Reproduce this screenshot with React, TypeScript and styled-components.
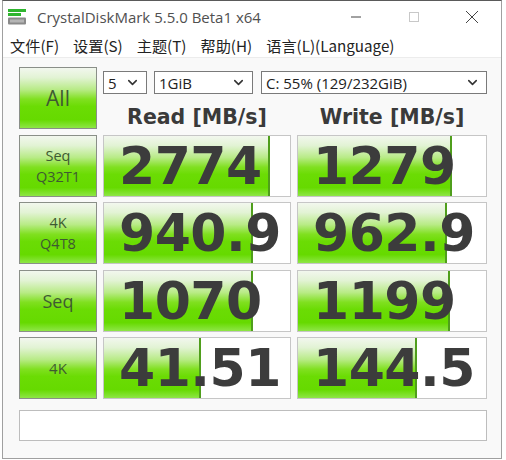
import styled, { createGlobalStyle } from "styled-components";
import { ChevronDown } from "lucide-react";

// #66dd00 (bar green)
// #f9f9f9 (client)
// #3c3c3c (numbers)

const GlobalStyle = createGlobalStyle`
  html, body {
    margin: 0;
    padding: 0;
    background: #ffffff;
  }
  body {
    font-family: "Open Sans", "Noto Sans CJK SC", sans-serif;
  }
`;

const Window = styled.div`
  width: 498px;
  height: 457px;
  margin-left: 2px;
  border: 1px solid #a0a0a0;
  border-top-color: #5a5a5a;
  display: flex;
  flex-direction: column;
  background: #ffffff;
`;

const TitleBar = styled.div`
  height: 31px;
  display: flex;
  align-items: center;
  padding-left: 4px;
  color: #505050;
  font-size: 15px;
`;

const TitleText = styled.span`
  margin-left: 10px;
  flex: 1;
`;

const WinButton = styled.div`
  width: 58px;
  height: 31px;
  display: flex;
  align-items: center;
  justify-content: center;
`;

const MenuBar = styled.div`
  height: 25px;
  display: flex;
  align-items: center;
  padding-left: 7px;
  gap: 14px;
  font-family: "Noto Sans CJK SC", sans-serif;
  font-size: 15.2px;
  color: #222;
`;

const Client = styled.div`
  flex: 1;
  background: #f9f9f9;
  border-top: 1px solid #ececec;
  padding: 9px 0 0 16px;
  display: grid;
  grid-template-columns: 78px 188px 190px;
  grid-template-rows: repeat(5, 62px) 36px;
  column-gap: 6px;
  row-gap: 5.5px;
`;

const greenGradient = `linear-gradient(to bottom,
  #f2f7ee 0%, #e2f3d4 16%, #b8eb86 36%, #80e020 52%,
  #6bdc04 64%, #66da00 86%, #8ee646 100%)`;

const LabelButton = styled.div<{ $size: number }>`
  border: 1px solid #8a8f88;
  background: ${greenGradient};
  display: flex;
  flex-direction: column;
  align-items: center;
  justify-content: center;
  color: #3e5a32;
  font-size: ${(p) => p.$size}px;
  line-height: ${(p) => (p.$size > 16 ? "1" : "21px")};
`;

const TopPanel = styled.div`
  grid-column: 2 / 4;
  display: flex;
  flex-direction: column;
`;

const SelectRow = styled.div`
  margin-top: 4px;
  display: flex;
  height: 24px;
`;

const Select = styled.div<{ $w: number; $ml: number }>`
  width: ${(p) => p.$w}px;
  margin-left: ${(p) => p.$ml}px;
  box-sizing: border-box;
  border: 1px solid #7a7a7a;
  background: #ffffff;
  display: flex;
  align-items: center;
  justify-content: space-between;
  padding: 0 6px 0 4px;
  font-size: 15px;
  color: #222;
`;

const HeadRow = styled.div`
  display: grid;
  grid-template-columns: 188px 190px;
  column-gap: 6px;
  margin-top: 11px;
`;

const Heading = styled.div`
  text-align: center;
  font-family: "DejaVu Sans", sans-serif;
  font-weight: bold;
  font-size: 20.5px;
  color: #3a3a3a;
`;

const Cell = styled.div`
  position: relative;
  border: 1px solid #c6c6c6;
  background: #ffffff;
  display: flex;
  align-items: center;
  justify-content: flex-start;
  padding-left: 15px;
  overflow: hidden;
`;

const Fill = styled.div`
  position: absolute;
  left: 0;
  top: 0;
  bottom: 0;
  background: ${greenGradient};
  border-right: 2px solid #4f9e1c;
`;

const Value = styled.span`
  position: relative;
  font-family: "DejaVu Sans", sans-serif;
  font-weight: bold;
  font-size: 52px;
  letter-spacing: -0.5px;
  color: #3c3c3c;
`;

const StatusBox = styled.div`
  grid-column: 1 / 4;
  margin-top: 5.5px;
  border: 1px solid #bdbdbd;
  background: #ffffff;
`;

const rows = [
  { label: ["Seq", "Q32T1"], size: 14.5, read: "2774", rf: 88, write: "1279", wf: 81 },
  { label: ["4K", "Q4T8"], size: 14.5, read: "940.9", rf: 79, write: "962.9", wf: 78 },
  { label: ["Seq"], size: 18, read: "1070", rf: 79, write: "1199", wf: 80 },
  { label: ["4K"], size: 15, read: "41.51", rf: 51, write: "144.5", wf: 62 },
];

function AppIcon() {
  return (
    <svg width="20" height="16" viewBox="0 0 20 16">
      <rect x="1" y="0" width="18" height="3" fill="#2fb52f" />
      <rect x="1" y="4" width="13" height="3" fill="#2fb52f" />
      <rect x="1" y="8.5" width="18" height="7" rx="1" fill="#8a8a8a" />
      <rect x="3" y="10.5" width="14" height="3" fill="#b5b5b5" />
    </svg>
  );
}

export default function App() {
  return (
    <>
      <GlobalStyle />
      <Window>
        <TitleBar>
          <AppIcon />
          <TitleText>CrystalDiskMark 5.5.0 Beta1 x64</TitleText>
          <WinButton>
            <svg width="12" height="12" viewBox="0 0 12 12">
              <line x1="1" y1="6" x2="11" y2="6" stroke="#444" strokeWidth="1" />
            </svg>
          </WinButton>
          <WinButton>
            <svg width="12" height="12" viewBox="0 0 12 12">
              <rect x="1.5" y="1.5" width="9" height="9" fill="none" stroke="#c8c8c8" strokeWidth="1" />
            </svg>
          </WinButton>
          <WinButton>
            <svg width="14" height="14" viewBox="0 0 14 14">
              <path d="M1 1 L13 13 M13 1 L1 13" stroke="#444" strokeWidth="1" />
            </svg>
          </WinButton>
        </TitleBar>
        <MenuBar>
          <span>文件(F)</span>
          <span>设置(S)</span>
          <span>主题(T)</span>
          <span>帮助(H)</span>
          <span>语言(L)(Language)</span>
        </MenuBar>
        <Client>
          <LabelButton $size={21}>All</LabelButton>
          <TopPanel>
            <SelectRow>
              <Select $w={44} $ml={0}>
                5 <ChevronDown size={15} strokeWidth={2.5} color="#333" />
              </Select>
              <Select $w={99} $ml={7}>
                1GiB <ChevronDown size={15} strokeWidth={2.5} color="#333" />
              </Select>
              <Select $w={226} $ml={8}>
                C: 55% (129/232GiB) <ChevronDown size={15} strokeWidth={2.5} color="#333" />
              </Select>
            </SelectRow>
            <HeadRow>
              <Heading>Read [MB/s]</Heading>
              <Heading>Write [MB/s]</Heading>
            </HeadRow>
          </TopPanel>
          {rows.map((r) => (
            <>
              <LabelButton key={r.read + "l"} $size={r.size}>
                {r.label.map((t) => (
                  <span key={t}>{t}</span>
                ))}
              </LabelButton>
              <Cell key={r.read}>
                <Fill style={{ width: `${r.rf}%` }} />
                <Value>{r.read}</Value>
              </Cell>
              <Cell key={r.write}>
                <Fill style={{ width: `${r.wf}%` }} />
                <Value>{r.write}</Value>
              </Cell>
            </>
          ))}
          <StatusBox />
        </Client>
      </Window>
    </>
  );
}
